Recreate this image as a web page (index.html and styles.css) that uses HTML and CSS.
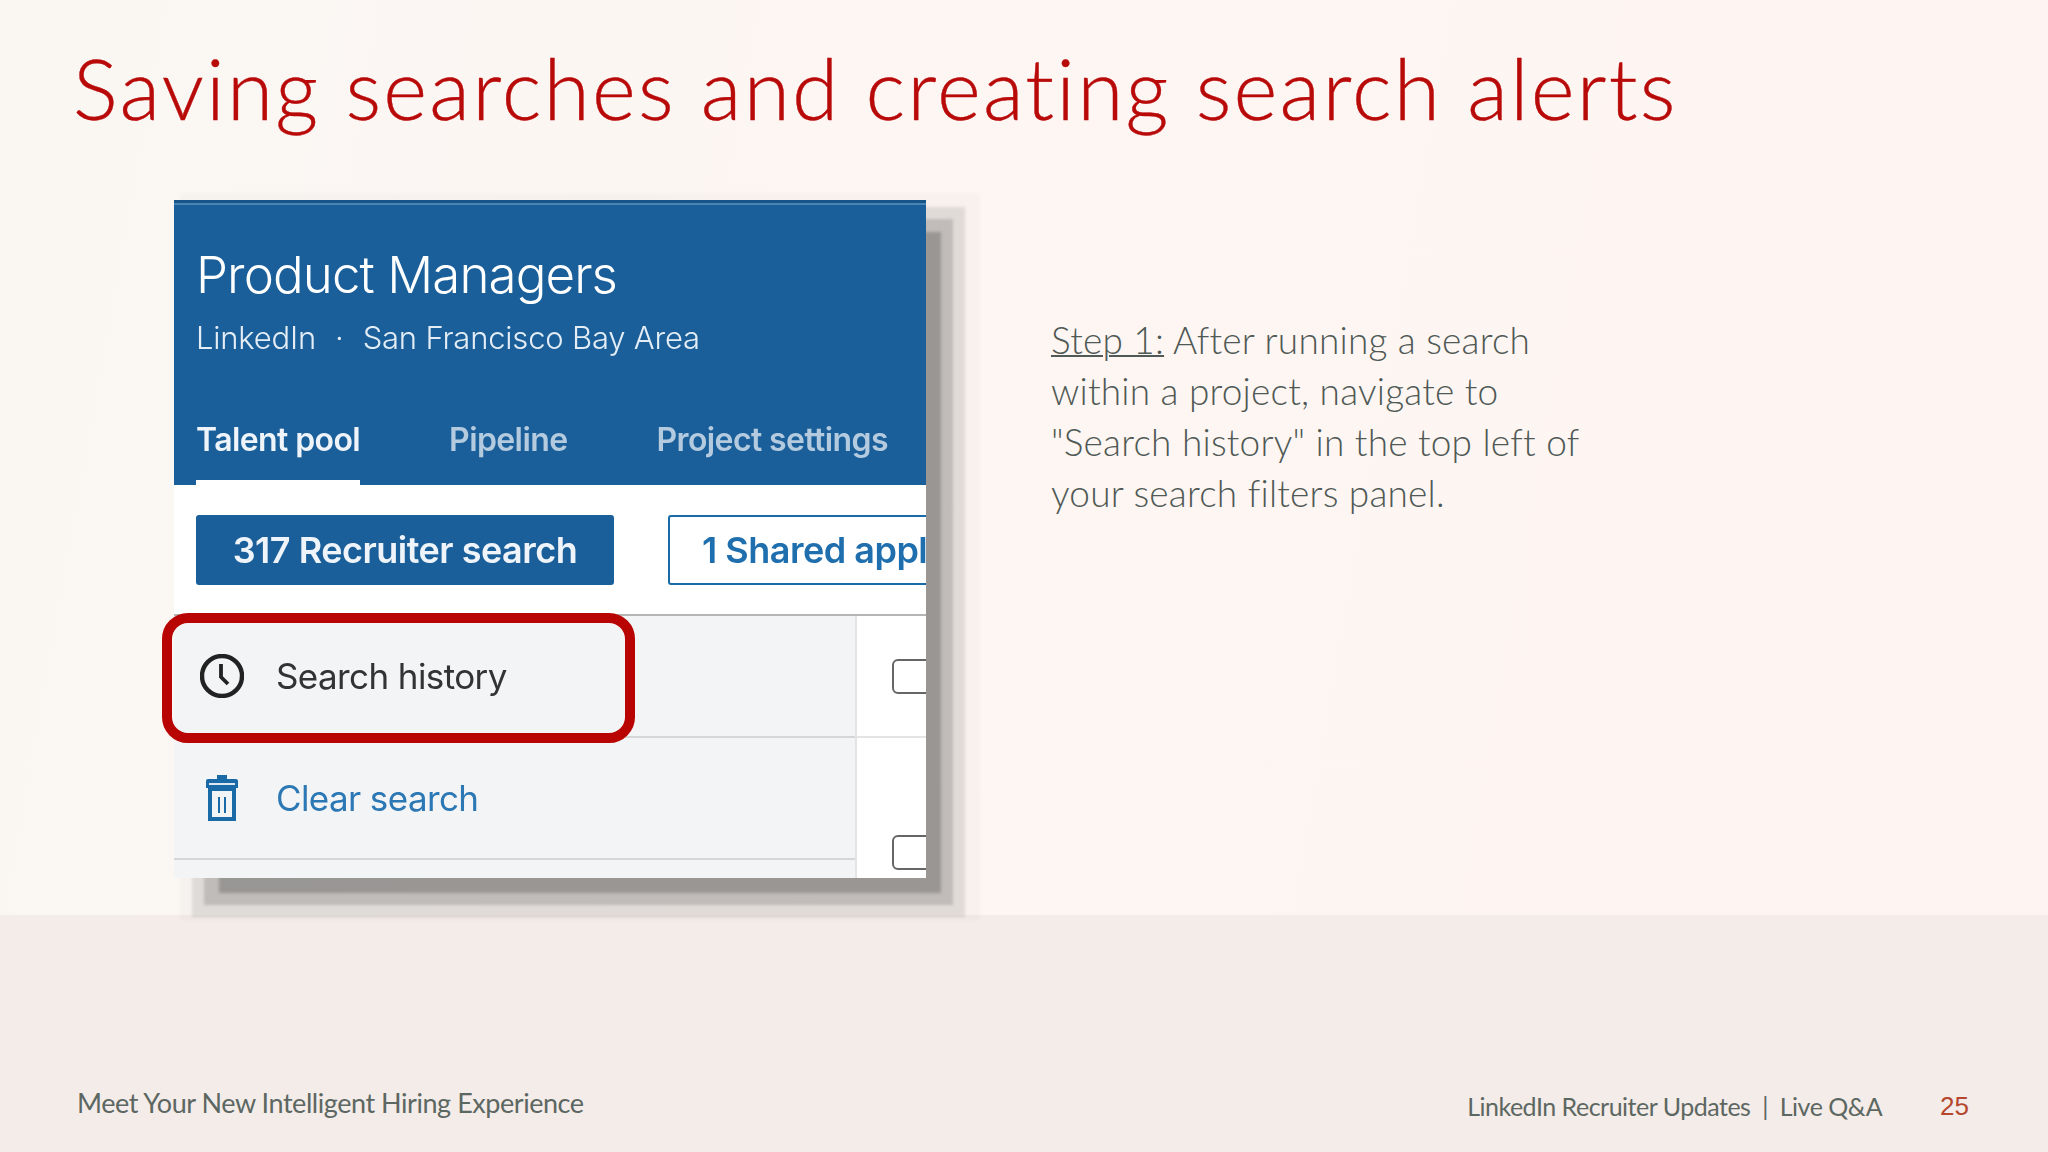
FILE: index.html
```html
<!DOCTYPE html>
<html lang="en">
<head>
<meta charset="utf-8">
<title>Saving searches and creating search alerts</title>
<link rel="stylesheet" href="styles.css">
</head>
<body>
<div class="slide">
  <section class="main">
    <h1 class="title">Saving searches and creating search alerts</h1>
    <div class="content">
      <div class="figure">
        <div class="shade shade-d"></div>
        <div class="shade shade-c"></div>
        <div class="shade shade-b"></div>
        <div class="shade shade-a"></div>
        <div class="shot">
          <header class="shot-head">
            <div class="shot-title">Product Managers</div>
            <div class="shot-sub"><span>LinkedIn</span><span class="dot">·</span><span>San Francisco Bay Area</span></div>
            <nav class="tabs">
              <span class="tab tab-active">Talent pool</span>
              <span class="tab">Pipeline</span>
              <span class="tab">Project settings</span>
            </nav>
          </header>
          <div class="btn-row">
            <span class="btn btn-solid">317 Recruiter search</span>
            <span class="btn btn-outline">1 Shared appl</span>
          </div>
          <div class="lower">
            <div class="filters">
              <div class="filter filter-first">
                <svg class="ico" viewBox="0 0 44 44" width="44" height="44"><circle cx="22" cy="22" r="20" fill="none" stroke="#222" stroke-width="4.4"/><path d="M21 10v13l7 7" fill="none" stroke="#222" stroke-width="3.8"/></svg>
                <span class="filter-dark">Search history</span>
              </div>
              <div class="filter filter-second">
                <svg class="ico" viewBox="0 0 44 48" width="44" height="48"><path d="M17 1h10v4h9a2 2 0 0 1 2 2v7H6V7a2 2 0 0 1 2-2h9z" fill="#1a6aa8"/><path d="M8 13h28v34H8z" fill="#1a6aa8"/><path d="M12 17h20v26H12z" fill="#f3f4f6"/><path d="M9 10h26" stroke="#dfe8f0" stroke-width="2" fill="none"/><path d="M19 23v16M25 23v16" stroke="#1a6aa8" stroke-width="2" fill="none"/></svg>
                <span class="filter-link">Clear search</span>
              </div>
            </div>
            <div class="results">
              <div class="result result-first"><span class="check"></span></div>
              <div class="result result-second"><span class="check"></span></div>
            </div>
          </div>
        </div>
        <div class="callout"></div>
      </div>
      <p class="step"><span class="step-label">Step 1:</span> After running a search<br>within a project, navigate to<br>"Search history" in the top left of<br>your search filters panel.</p>
    </div>
  </section>
  <footer class="band">
    <div class="foot-left">Meet Your New Intelligent Hiring Experience</div>
    <div class="foot-right">
      <span class="foot-name">LinkedIn Recruiter Updates&nbsp; |&nbsp; Live Q&amp;A</span>
      <span class="page">25</span>
    </div>
  </footer>
</div>
</body>
</html>
```
FILE: styles.css
```css
html, body { margin: 0; padding: 0; }
body { width: 2048px; height: 1152px; overflow: hidden; background: #fdf6f3; }
.slide { width: 2048px; height: 1152px; display: flex; flex-direction: column; font-family: "Lato", sans-serif; }
.main { height: 915px; box-sizing: border-box; background: linear-gradient(100deg, #faf7f3 0%, #fdf6f3 40%, #fef5f2 100%); padding: 40px 0 0 73px; }
.title { margin: 0; font-family: "Lato", sans-serif; font-weight: 300; font-size: 84px; line-height: 96px; color: #b90a0a; white-space: nowrap; letter-spacing: 2.2px; -webkit-text-stroke: .4px #b90a0a; }
.content { display: flex; margin: 64px 0 0 101px; }
.figure { position: relative; width: 752px; height: 678px; flex: none; }
.shade { position: absolute; filter: blur(1.5px); }
.shade-d { inset: -7px -54px -42px 6px; background: rgba(0,0,0,.018); }
.shade-c { inset: 7px -39px -39px 18px; background: rgba(0,0,0,.09); }
.shade-b { inset: 19px -27px -27px 30px; background: rgba(0,0,0,.14); }
.shade-a { inset: 32px -15px -15px 45px; background: rgba(0,0,0,.2); }
.shot { position: relative; width: 752px; height: 678px; overflow: hidden; background: #fff; font-family: "Inter", sans-serif; display: flex; flex-direction: column; filter: blur(.6px); }
.shot-head { height: 285px; box-sizing: border-box; flex: none; background: #1a5f99; color: #fff; padding: 43px 0 0 22px; border-top: 3px solid #175488; box-shadow: inset 0 2px 0 #4a84b2; display: flex; flex-direction: column; position: relative; }
.shot-title { font-size: 51px; line-height: 58px; font-weight: 300; letter-spacing: -.9px; white-space: nowrap; }
.shot-sub { font-size: 31px; line-height: 36px; margin-top: 16px; color: #e4edf5; letter-spacing: -.2px; display: flex; white-space: nowrap; font-weight: 300; }
.dot { margin: 0 19px; }
.tabs { display: flex; gap: 89px; margin-top: auto; }
.tab { font-size: 32px; line-height: 36px; font-weight: 600; color: #b3cadf; letter-spacing: -.6px; padding-bottom: 27px; white-space: nowrap; }
.tab-active { color: #eef4f9; border-bottom: 5px solid #fff; padding-bottom: 22px; }
.btn-row { height: 131px; box-sizing: border-box; flex: none; display: flex; gap: 54px; padding: 30px 0 0 22px; border-bottom: 2px solid #b5b5b5; }
.btn { height: 70px; box-sizing: border-box; display: flex; align-items: center; font-size: 36px; font-weight: 600; letter-spacing: -.5px; border-radius: 3px; white-space: nowrap; flex: none; }
.btn-solid { width: 418px; background: #1a5f99; color: #eef4f9; justify-content: center; }
.btn-outline { width: 300px; border: 2px solid #1a6aa8; color: #1f6fae; padding-left: 32px; }
.lower { flex: 1; display: flex; }
.filters { width: 681px; flex: none; background: #f3f4f6; border-right: 2px solid #e4e4e4; }
.filter { display: flex; align-items: center; box-sizing: border-box; padding-left: 26px; gap: 32px; border-bottom: 2px solid #d6d6d6; font-size: 35px; letter-spacing: -.6px; white-space: nowrap; }
.filter-first { height: 122px; }
.filter-second { height: 122px; }
.filter-dark { color: #333; font-weight: 400; }
.filter-link { color: #2b78b5; font-weight: 400; }
.ico { flex: none; }
.results { flex: 1; background: #fff; }
.result { box-sizing: border-box; padding-left: 35px; }
.result-first { height: 122px; padding-top: 43px; border-bottom: 2px solid #e4e4e4; }
.result-second { padding-top: 97px; }
.check { display: block; width: 50px; height: 35px; box-sizing: border-box; border: 2px solid #666; border-radius: 6px; background: #fff; }
.callout { position: absolute; left: -12px; top: 413px; width: 473px; height: 130px; box-sizing: border-box; border: 10px solid #b90404; border-radius: 26px; }
.step { margin: 114px 0 0 125px; font-family: "Lato", sans-serif; font-weight: 300; font-size: 37px; line-height: 51px; color: #4f5955; white-space: nowrap; letter-spacing: .2px; }
.step-label { text-decoration: underline; text-decoration-thickness: 2px; }
.band { height: 237px; box-sizing: border-box; background: #f3ece9; display: flex; justify-content: space-between; padding: 168px 79px 0 77px; color: #5d6762; }
.foot-left { font-size: 27px; line-height: 40px; letter-spacing: -.45px; white-space: nowrap; }
.foot-right { display: flex; gap: 58px; padding-top: 3px; }
.foot-name { font-size: 25px; line-height: 40px; letter-spacing: -.5px; white-space: nowrap; }
.page { font-family: "Liberation Sans", sans-serif; font-size: 26px; line-height: 40px; color: #b5472e; }
```
